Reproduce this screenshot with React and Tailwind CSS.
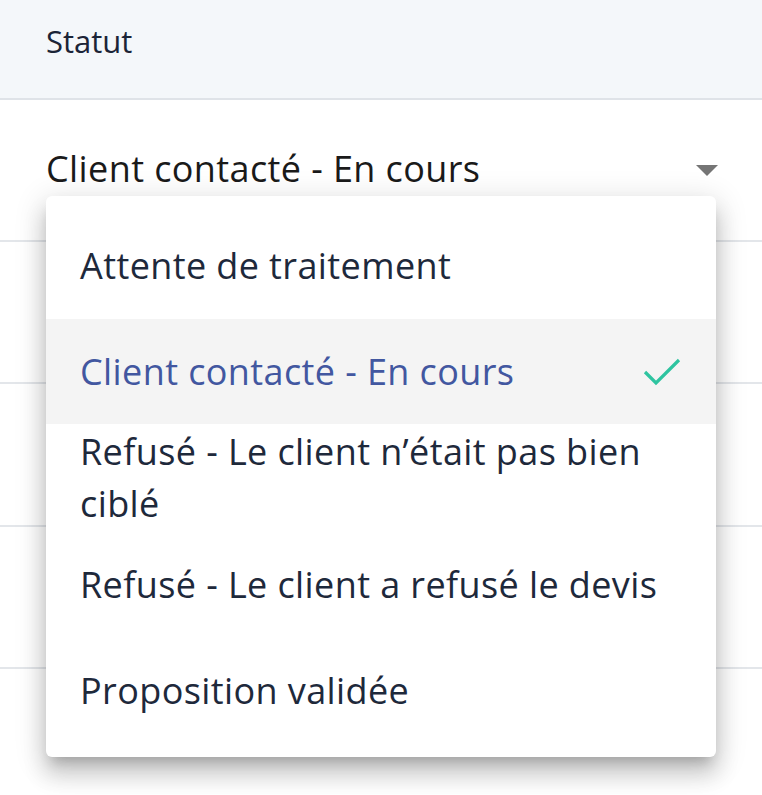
import React from 'react';

const options = [
  { label: 'Attente de traitement', h: 'h-[106px]' },
  { label: 'Client contacté - En cours', h: 'h-[105px]', selected: true },
  { label: 'Refusé - Le client n’était pas bien ciblé', h: 'h-[108px]' },
  { label: 'Refusé - Le client a refusé le devis', h: 'h-[106px]' },
  { label: 'Proposition validée', h: 'h-[106px]' },
];

function Caret() {
  return (
    <svg width="22" height="11" viewBox="0 0 22 11">
      <path d="M0 0 L22 0 L11 11 Z" fill="#757575" />
    </svg>
  );
}

function Check() {
  return (
    <svg width="40" height="32" viewBox="0 0 40 32" className="shrink-0">
      <path d="M3 16 L14 27 L37 4" fill="none" stroke="#2ec4a0" strokeWidth="3.2" />
    </svg>
  );
}

export default function App() {
  return (
    <div className="relative w-[762px] h-[795px] bg-white overflow-hidden" style={{ fontFamily: '"Open Sans", "Noto Sans", sans-serif' }}>
      <div className="h-[100px] bg-[#f4f7fa] border-b-2 border-[#dfe3e8] flex items-center pl-[46px] pb-[16px]">
        <span className="text-[31px] text-[#1b2437]">Statut</span>
      </div>

      <div className="h-[142px] border-b-2 border-[#e3e6ea] flex items-start pt-[42px] pl-[46px] pr-[44px]">
        <span className="flex-1 text-[36px] tracking-[0.4px] text-[#1a1a1a]">Client contacté - En cours</span>
        <div className="pt-[23px]"><Caret /></div>
      </div>
      <div className="h-[142px] border-b-2 border-[#e3e6ea]" />
      <div className="h-[143px] border-b-2 border-[#e3e6ea]" />
      <div className="h-[142px] border-b-2 border-[#e3e6ea]" />

      <div className="absolute left-[46px] top-[196px] w-[670px] bg-white rounded-[6px] pt-[17px] pb-[13px] shadow-[0_10px_12px_-6px_rgba(0,0,0,0.2),0_18px_22px_2px_rgba(0,0,0,0.14),0_6px_30px_4px_rgba(0,0,0,0.12)]">
        {options.map((o) => (
          <div
            key={o.label}
            className={`${o.h} flex items-center pl-[34px] pr-[34px] ${o.selected ? 'bg-[#f4f4f4]' : ''}`}
          >
            <span className={`flex-1 text-[36px] tracking-[0.4px] leading-[52px] ${o.selected ? 'text-[#4257a0]' : 'text-[#1e293b]'}`}>
              {o.label}
            </span>
            {o.selected && <Check />}
          </div>
        ))}
      </div>
    </div>
  );
}
